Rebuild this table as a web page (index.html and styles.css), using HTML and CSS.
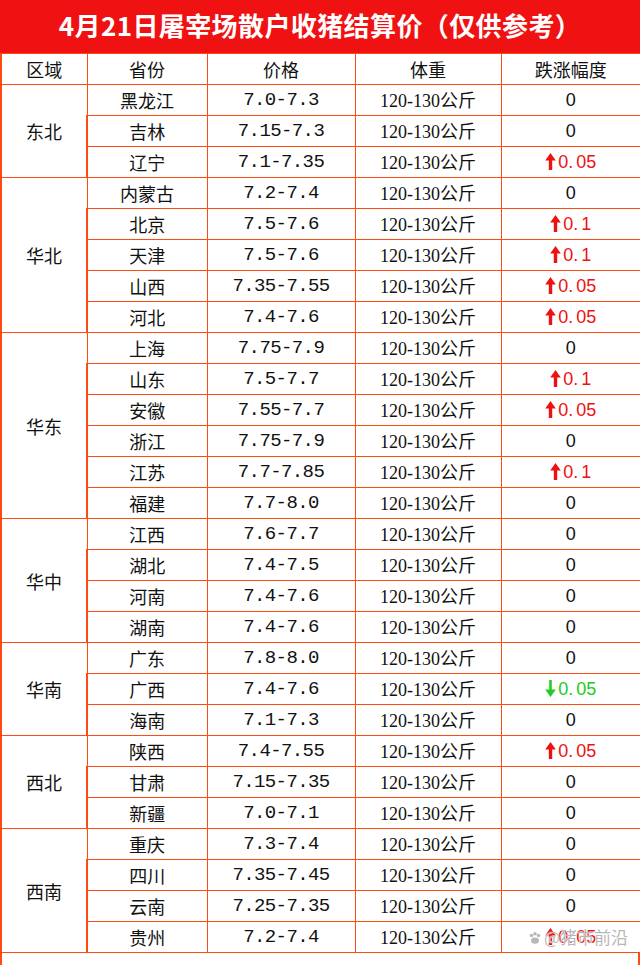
FILE: index.html
```html
<!DOCTYPE html>
<html lang="zh">
<head>
<meta charset="utf-8">
<title>4月21日屠宰场散户收猪结算价</title>
<link rel="stylesheet" href="styles.css">
</head>
<body>
<div class="page">
  <div class="title">4月21日屠宰场散户收猪结算价（仅供参考）</div>
  <table class="grid">
    <colgroup>
      <col class="c1"><col class="c2"><col class="c3"><col class="c4"><col class="c5">
    </colgroup>
    <thead>
      <tr><th>区域</th><th>省份</th><th>价格</th><th>体重</th><th>跌涨幅度</th></tr>
    </thead>
    <tbody>
      <tr><td class="reg" rowspan="3">东北</td><td class="prov">黑龙江</td><td class="price">7.0-7.3</td><td class="wt"><span class="num">120-130</span>公斤</td><td class="chg">0</td></tr>
      <tr><td class="prov">吉林</td><td class="price">7.15-7.3</td><td class="wt"><span class="num">120-130</span>公斤</td><td class="chg">0</td></tr>
      <tr><td class="prov">辽宁</td><td class="price">7.1-7.35</td><td class="wt"><span class="num">120-130</span>公斤</td><td class="chg up"><svg class="arr" viewBox="0 0 10 16"><path d="M5 0 L10 7 H6.6 V16 H3.4 V7 H0 Z"/></svg>0<span class="dot">.</span>05</td></tr>

      <tr><td class="reg" rowspan="5">华北</td><td class="prov">内蒙古</td><td class="price">7.2-7.4</td><td class="wt"><span class="num">120-130</span>公斤</td><td class="chg">0</td></tr>
      <tr><td class="prov">北京</td><td class="price">7.5-7.6</td><td class="wt"><span class="num">120-130</span>公斤</td><td class="chg up"><svg class="arr" viewBox="0 0 10 16"><path d="M5 0 L10 7 H6.6 V16 H3.4 V7 H0 Z"/></svg>0<span class="dot">.</span>1</td></tr>
      <tr><td class="prov">天津</td><td class="price">7.5-7.6</td><td class="wt"><span class="num">120-130</span>公斤</td><td class="chg up"><svg class="arr" viewBox="0 0 10 16"><path d="M5 0 L10 7 H6.6 V16 H3.4 V7 H0 Z"/></svg>0<span class="dot">.</span>1</td></tr>
      <tr><td class="prov">山西</td><td class="price">7.35-7.55</td><td class="wt"><span class="num">120-130</span>公斤</td><td class="chg up"><svg class="arr" viewBox="0 0 10 16"><path d="M5 0 L10 7 H6.6 V16 H3.4 V7 H0 Z"/></svg>0<span class="dot">.</span>05</td></tr>
      <tr><td class="prov">河北</td><td class="price">7.4-7.6</td><td class="wt"><span class="num">120-130</span>公斤</td><td class="chg up"><svg class="arr" viewBox="0 0 10 16"><path d="M5 0 L10 7 H6.6 V16 H3.4 V7 H0 Z"/></svg>0<span class="dot">.</span>05</td></tr>

      <tr><td class="reg" rowspan="6">华东</td><td class="prov">上海</td><td class="price">7.75-7.9</td><td class="wt"><span class="num">120-130</span>公斤</td><td class="chg">0</td></tr>
      <tr><td class="prov">山东</td><td class="price">7.5-7.7</td><td class="wt"><span class="num">120-130</span>公斤</td><td class="chg up"><svg class="arr" viewBox="0 0 10 16"><path d="M5 0 L10 7 H6.6 V16 H3.4 V7 H0 Z"/></svg>0<span class="dot">.</span>1</td></tr>
      <tr><td class="prov">安徽</td><td class="price">7.55-7.7</td><td class="wt"><span class="num">120-130</span>公斤</td><td class="chg up"><svg class="arr" viewBox="0 0 10 16"><path d="M5 0 L10 7 H6.6 V16 H3.4 V7 H0 Z"/></svg>0<span class="dot">.</span>05</td></tr>
      <tr><td class="prov">浙江</td><td class="price">7.75-7.9</td><td class="wt"><span class="num">120-130</span>公斤</td><td class="chg">0</td></tr>
      <tr><td class="prov">江苏</td><td class="price">7.7-7.85</td><td class="wt"><span class="num">120-130</span>公斤</td><td class="chg up"><svg class="arr" viewBox="0 0 10 16"><path d="M5 0 L10 7 H6.6 V16 H3.4 V7 H0 Z"/></svg>0<span class="dot">.</span>1</td></tr>
      <tr><td class="prov">福建</td><td class="price">7.7-8.0</td><td class="wt"><span class="num">120-130</span>公斤</td><td class="chg">0</td></tr>

      <tr><td class="reg" rowspan="4">华中</td><td class="prov">江西</td><td class="price">7.6-7.7</td><td class="wt"><span class="num">120-130</span>公斤</td><td class="chg">0</td></tr>
      <tr><td class="prov">湖北</td><td class="price">7.4-7.5</td><td class="wt"><span class="num">120-130</span>公斤</td><td class="chg">0</td></tr>
      <tr><td class="prov">河南</td><td class="price">7.4-7.6</td><td class="wt"><span class="num">120-130</span>公斤</td><td class="chg">0</td></tr>
      <tr><td class="prov">湖南</td><td class="price">7.4-7.6</td><td class="wt"><span class="num">120-130</span>公斤</td><td class="chg">0</td></tr>

      <tr><td class="reg" rowspan="3">华南</td><td class="prov">广东</td><td class="price">7.8-8.0</td><td class="wt"><span class="num">120-130</span>公斤</td><td class="chg">0</td></tr>
      <tr><td class="prov">广西</td><td class="price">7.4-7.6</td><td class="wt"><span class="num">120-130</span>公斤</td><td class="chg down"><svg class="arr" viewBox="0 0 10 16"><path d="M5 16 L10 9 H6.2 V0 H3.8 V9 H0 Z"/></svg>0<span class="dot">.</span>05</td></tr>
      <tr><td class="prov">海南</td><td class="price">7.1-7.3</td><td class="wt"><span class="num">120-130</span>公斤</td><td class="chg">0</td></tr>

      <tr><td class="reg" rowspan="3">西北</td><td class="prov">陕西</td><td class="price">7.4-7.55</td><td class="wt"><span class="num">120-130</span>公斤</td><td class="chg up"><svg class="arr" viewBox="0 0 10 16"><path d="M5 0 L10 7 H6.6 V16 H3.4 V7 H0 Z"/></svg>0<span class="dot">.</span>05</td></tr>
      <tr><td class="prov">甘肃</td><td class="price">7.15-7.35</td><td class="wt"><span class="num">120-130</span>公斤</td><td class="chg">0</td></tr>
      <tr><td class="prov">新疆</td><td class="price">7.0-7.1</td><td class="wt"><span class="num">120-130</span>公斤</td><td class="chg">0</td></tr>

      <tr><td class="reg" rowspan="4">西南</td><td class="prov">重庆</td><td class="price">7.3-7.4</td><td class="wt"><span class="num">120-130</span>公斤</td><td class="chg">0</td></tr>
      <tr><td class="prov">四川</td><td class="price">7.35-7.45</td><td class="wt"><span class="num">120-130</span>公斤</td><td class="chg">0</td></tr>
      <tr><td class="prov">云南</td><td class="price">7.25-7.35</td><td class="wt"><span class="num">120-130</span>公斤</td><td class="chg">0</td></tr>
      <tr><td class="prov">贵州</td><td class="price">7.2-7.4</td><td class="wt"><span class="num">120-130</span>公斤</td><td class="chg up"><svg class="arr" viewBox="0 0 10 16"><path d="M5 0 L10 7 H6.6 V16 H3.4 V7 H0 Z"/></svg>0<span class="dot">.</span>05</td></tr>
    </tbody>
  </table>
  <div class="foot"></div>
  <div class="mark"><svg class="paw" viewBox="0 0 16 16"><circle cx="4" cy="5" r="2"/><circle cx="8" cy="3" r="2"/><circle cx="12" cy="5" r="2"/><ellipse cx="8" cy="11" rx="4.5" ry="3.5"/></svg>@猪市前沿</div>
</div>
</body>
</html>
```
FILE: styles.css
```css
html, body {
  margin: 0;
  padding: 0;
  background: #ffffff;
}
.page {
  position: relative;
  width: 640px;
  height: 965px;
  overflow: hidden;
  font-family: "Noto Sans CJK SC", sans-serif;
  color: #111;
}
.title {
  height: 53px;
  background: #f01212;
  color: #fff;
  font-weight: 700;
  font-size: 26px;
  line-height: 50px;
  text-align: center;
  letter-spacing: 0.4px;
}
.grid {
  width: 640px;
  border-collapse: collapse;
  table-layout: fixed;
}
.c1 { width: 86px; }
.c2 { width: 120px; }
.c3 { width: 148px; }
.c4 { width: 146px; }
.c5 { width: 140px; }
.grid th, .grid td {
  border: 1px solid #ff4a12;
  padding: 0;
  height: 30px;
  text-align: center;
  vertical-align: middle;
  font-weight: 400;
  font-size: 18px;
  line-height: 20px;
  white-space: nowrap;
}
.grid th { color: #111; }
.grid tr > :first-child { border-left-width: 2px; }
.grid tr > :last-child { border-right-width: 2px; }
.price {
  font-family: "Liberation Mono", monospace;
  font-size: 19px !important;
  letter-spacing: -0.6px;
}
.num {
  font-family: "Liberation Serif", serif;
}
.chg {
  font-family: "Liberation Sans", Arial, sans-serif;
}
.up { color: #ee1111; }
.down { color: #22cc22; }
.dot { margin-right: 3px; }
.arr {
  width: 11px;
  height: 17px;
  margin-right: 2px;
  vertical-align: -2px;
  fill: currentColor;
}
.foot {
  height: 14px;
  border-left: 2px solid #ff4a12;
  border-right: 2px solid #ff4a12;
}
.mark {
  position: absolute;
  left: 528px;
  top: 926px;
  font-size: 17px;
  line-height: 22px;
  color: rgba(170, 170, 170, 0.85);
  text-shadow: 0 0 1px #fff, 0 0 1px #fff;
  white-space: nowrap;
}
.paw {
  width: 14px;
  height: 14px;
  margin-right: 2px;
  vertical-align: -1px;
  fill: rgba(170, 170, 170, 0.85);
}
```
